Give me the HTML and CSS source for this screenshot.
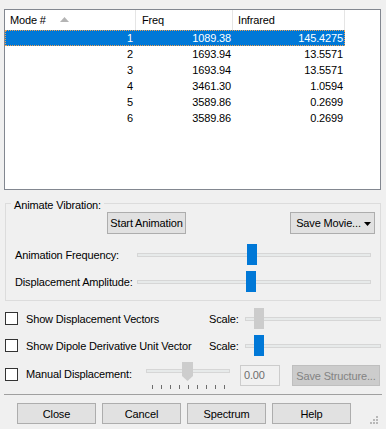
FILE: index.html
```html
<!DOCTYPE html>
<html>
<head>
<meta charset="utf-8">
<link rel="stylesheet" href="styles.css">
</head>
<body>
<div class="dialog">
  <div class="list">
    <div class="hdr">
      <div class="hc c1">Mode #<svg class="sort" width="9" height="5" viewBox="0 0 9 5"><polygon points="0,5 4.5,0 9,5" fill="#B4B4B4"/></svg></div>
      <div class="hc c2">Freq</div>
      <div class="hc c3">Infrared</div>
    </div>
    <div class="row sel"><span class="c1">1</span><span class="c2">1089.38</span><span class="c3">145.4275</span></div>
    <div class="row"><span class="c1">2</span><span class="c2">1693.94</span><span class="c3">13.5571</span></div>
    <div class="row"><span class="c1">3</span><span class="c2">1693.94</span><span class="c3">13.5571</span></div>
    <div class="row"><span class="c1">4</span><span class="c2">3461.30</span><span class="c3">1.0594</span></div>
    <div class="row"><span class="c1">5</span><span class="c2">3589.86</span><span class="c3">0.2699</span></div>
    <div class="row"><span class="c1">6</span><span class="c2">3589.86</span><span class="c3">0.2699</span></div>
  </div>

  <fieldset class="group">
    <legend>Animate Vibration:</legend>
    <div class="btnrow">
      <div class="btn start">Start Animation</div>
      <div class="btn movie">Save Movie...<svg class="drop" width="7" height="4" viewBox="0 0 7 4"><polygon points="0,0 7,0 3.5,4" fill="#000"/></svg></div>
    </div>
    <div class="srow first">
      <span class="slabel">Animation Frequency:</span>
      <div class="slider wide"><div class="track"></div><div class="thumb blue" style="margin-left:110px"></div></div>
    </div>
    <div class="srow">
      <span class="slabel">Displacement Amplitude:</span>
      <div class="slider wide"><div class="track"></div><div class="thumb blue" style="margin-left:109px"></div></div>
    </div>
  </fieldset>

  <div class="crow first">
    <span class="cb"></span>
    <span class="clabel">Show Displacement Vectors</span>
    <span class="scale">Scale:</span>
    <div class="slider narrow"><div class="track"></div><div class="thumb gray" style="margin-left:9px"></div></div>
  </div>
  <div class="crow">
    <span class="cb"></span>
    <span class="clabel">Show Dipole Derivative Unit Vector</span>
    <span class="scale">Scale:</span>
    <div class="slider narrow"><div class="track"></div><div class="thumb blue" style="margin-left:9px"></div></div>
  </div>
  <div class="mrow">
    <span class="cb"></span>
    <span class="mlabel">Manual Displacement:</span>
    <svg class="mslider" width="84" height="28" viewBox="0 0 84 28">
      <rect x="0.5" y="8.5" width="83" height="3" fill="#E7EAEA" stroke="#D6D6D6"/>
      <polygon points="36,1 47,1 47,15 41.5,20 36,15" fill="#CDCDCD"/>
      <g stroke="#6D6D6D" stroke-width="1">
        <line x1="6.5" y1="24" x2="6.5" y2="28"/>
        <line x1="15.5" y1="24" x2="15.5" y2="28"/>
        <line x1="24.5" y1="24" x2="24.5" y2="28"/>
        <line x1="33.5" y1="24" x2="33.5" y2="28"/>
        <line x1="42.5" y1="24" x2="42.5" y2="28"/>
        <line x1="51.5" y1="24" x2="51.5" y2="28"/>
        <line x1="60.5" y1="24" x2="60.5" y2="28"/>
        <line x1="69.5" y1="24" x2="69.5" y2="28"/>
        <line x1="78.5" y1="24" x2="78.5" y2="28"/>
      </g>
    </svg>
    <div class="tbox">0.00</div>
    <div class="btn disabled">Save Structure...</div>
  </div>

  <div class="sep"></div>

  <div class="brow">
    <div class="btn bb">Close</div>
    <div class="btn bb">Cancel</div>
    <div class="btn bb">Spectrum</div>
    <div class="btn bb">Help</div>
  </div>

  <svg class="grip" width="9" height="9" viewBox="0 0 9 9">
    <g fill="#B8B8B8">
      <rect x="7" y="1" width="2" height="2"/>
      <rect x="4" y="4" width="2" height="2"/>
      <rect x="7" y="4" width="2" height="2"/>
      <rect x="1" y="7" width="2" height="2"/>
      <rect x="4" y="7" width="2" height="2"/>
      <rect x="7" y="7" width="2" height="2"/>
    </g>
  </svg>
</div>
</body>
</html>
```

FILE: styles.css
```css
* { box-sizing: border-box; }
html, body { margin: 0; padding: 0; }
body {
  background: #F0F0F0;
  font-family: "Liberation Sans", Arial, sans-serif;
  font-size: 11px;
  letter-spacing: -0.15px;
  color: #000;
  width: 386px;
  height: 429px;
  overflow: hidden;
}
.dialog {
  position: relative;
  width: 386px;
  height: 429px;
  padding: 9px 4px 0 4px;
}

/* list view */
.list {
  width: 377px;
  height: 181px;
  border: 1px solid #828790;
  background: #fff;
}
.hdr {
  display: flex;
  height: 20px;
}
.hc {
  height: 20px;
  line-height: 20px;
  border-right: 1px solid #E5E5E5;
  display: flex;
  align-items: center;
}
.hdr .c1 { width: 131px; padding-left: 5px; }
.hdr .c2 { width: 97px; padding-left: 6px; }
.hdr .c3 { width: 112px; padding-left: 5px; }
.sort { margin-left: 14px; margin-top: -2px; }

.row {
  display: flex;
  width: 340px;
  height: 16px;
  line-height: 16px;
}
.row span { text-align: right; display: block; }
.row .c1 { width: 131px; padding-right: 3px; }
.row .c2 { width: 97px; padding-right: 2px; }
.row .c3 { width: 112px; padding-right: 2px; }
.row.sel {
  background: #0078D7;
  color: #fff;
  outline: 1px dotted #F0A050;
  outline-offset: -1px;
}

/* group box */
.group {
  margin: 5px 0 0 1px;
  width: 376px;
  padding: 0 0 8px 0;
  border: 1px solid #DCDCDC;
  min-width: 0;
}
.group legend {
  margin-left: 5px;
  padding: 4px 3px 0 3px;
  line-height: 12px;
}
.btnrow {
  display: flex;
  margin-top: 1px;
}
.btn {
  height: 22px;
  background: #E1E1E1;
  border: 1px solid #ADADAD;
  display: flex;
  align-items: center;
  justify-content: center;
  white-space: nowrap;
}
.btn.start { width: 79px; margin-left: 101px; }
.btn.movie { width: 85px; margin-left: auto; margin-right: 5px; padding-left: 2px; }
.drop { margin-left: 3px; margin-top: 1px; }

.srow {
  display: flex;
  align-items: center;
  padding-left: 9px;
  margin-top: 6px;
}
.srow.first { margin-top: 10px; }
.slabel { width: 122px; }

.slider {
  display: grid;
  align-items: center;
  height: 21px;
}
.slider > * { grid-area: 1 / 1; }
.slider.wide { width: 234px; }
.slider.narrow { width: 136px; }
.track {
  height: 4px;
  border: 1px solid #D6D6D6;
  background: #E7EAEA;
}
.thumb {
  justify-self: start;
  width: 10px;
  height: 21px;
}
.thumb.blue { background: #0078D7; }
.thumb.gray { background: #CCCCCC; }

/* checkbox rows */
.crow {
  display: flex;
  align-items: center;
  height: 21px;
  margin-top: 6px;
}
.crow.first { margin-top: 7px; }
.cb {
  display: block;
  width: 13px;
  height: 13px;
  border: 1px solid #333333;
  background: #fff;
  margin-left: 1px;
  flex: none;
}
.clabel { width: 183px; margin-left: 8px; white-space: nowrap; }
.scale { width: 36px; }

.mrow {
  display: flex;
  align-items: flex-start;
  height: 28px;
  margin-top: 5px;
}
.mrow .cb { margin-top: 7px; }
.mlabel {
  width: 120px;
  margin-left: 8px;
  margin-top: 7px;
  line-height: 13px;
}
.mslider { display: block; flex: none; }
.tbox {
  width: 40px;
  height: 21px;
  margin-left: 10px;
  margin-top: 4px;
  border: 1px solid #CCCCCC;
  color: #6D6D6D;
  line-height: 19px;
  padding-left: 3px;
}
.btn.disabled {
  width: 88px;
  height: 21px;
  margin-left: 12px;
  margin-top: 4px;
  background: #CCCCCC;
  border-color: #BFBFBF;
  color: #838383;
}

.sep {
  margin-top: 5px;
  width: 378px;
  height: 1px;
  background: #A0A0A0;
}

.brow {
  display: flex;
  gap: 6px;
  margin-top: 8px;
  padding-left: 13px;
}
.btn.bb { width: 79px; height: 21px; }

.grip {
  position: absolute;
  right: 8px;
  bottom: 5px;
}
```
